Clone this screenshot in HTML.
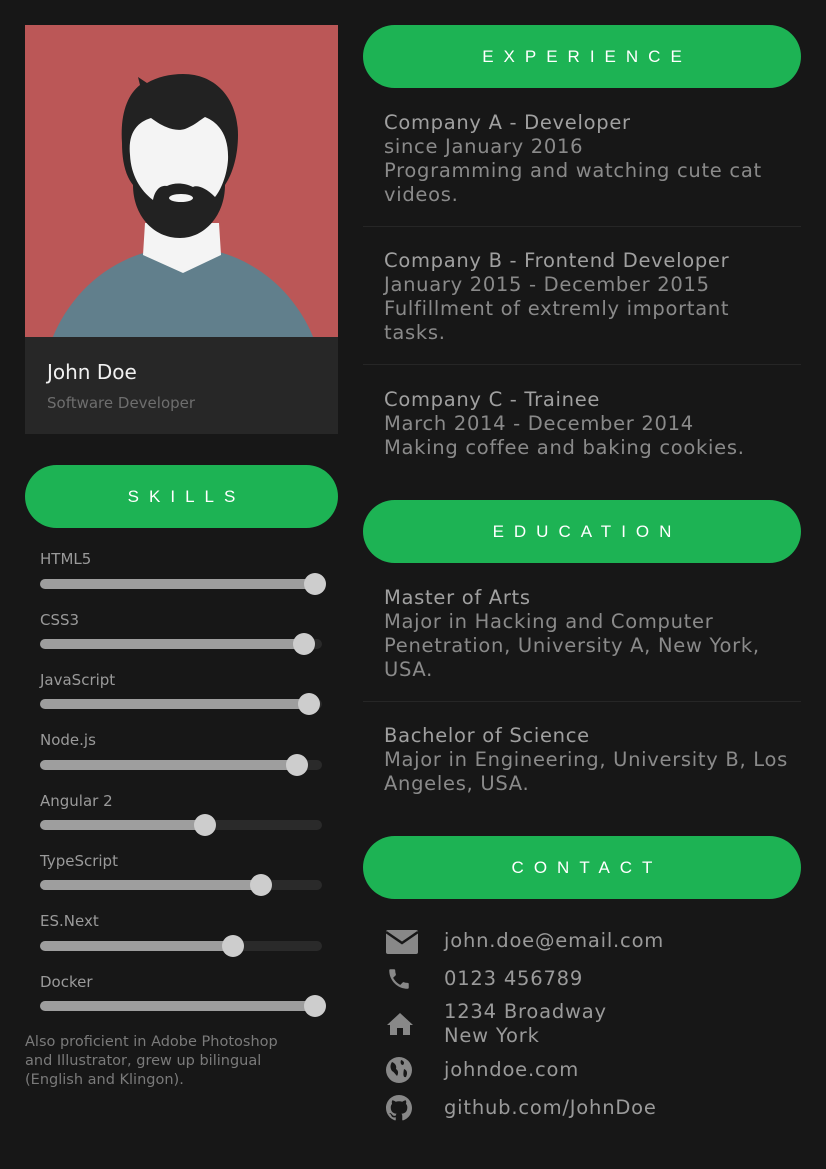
<!DOCTYPE html>
<html><head><meta charset="utf-8"><style>
*{margin:0;padding:0;box-sizing:border-box}
body{width:826px;height:1169px;background:#171717;position:relative;overflow:hidden;font-family:"DejaVu Sans","Liberation Sans",sans-serif;color:#8e8e8e}
.a{position:absolute;white-space:nowrap}
.btn{position:absolute;height:63px;border-radius:32px;background:#1db354;color:#fff;font-size:17px;letter-spacing:10px;text-align:center;line-height:63px;padding-left:10px;font-family:"Liberation Sans",sans-serif}
.txt{position:absolute;left:384px;font-size:19.5px;letter-spacing:0.7px;line-height:24px;color:#8a8a8a;white-space:nowrap}
.txt b{font-weight:normal;color:#a0a0a0}
.hr{position:absolute;left:363px;width:438px;height:1px;background:#262626}
.lbl{position:absolute;left:40px;font-size:15px;color:#9a9a9a}
.tr{position:absolute;left:40px;width:282px;height:10px;border-radius:5px;background:#2a2a2a}
.fill{position:absolute;left:0;top:0;height:10px;border-radius:5px;background:#9e9e9e}
.kn{position:absolute;width:22px;height:22px;border-radius:50%;background:#cdcdcd;top:-6px}
.ct{position:absolute;left:444px;font-size:19.5px;letter-spacing:0.8px;color:#9a9a9a;line-height:24px;white-space:nowrap}
.ic{position:absolute;left:386px}
</style></head><body>
<div class="a" style="left:25px;top:25px;width:313px;height:312px;background:#bb5757;overflow:hidden">
<svg width="313" height="312" viewBox="0 0 313 312">
<ellipse cx="158" cy="372" rx="142" ry="150" fill="#617f8c"/>
<polygon points="120,198 194,198 196,230 158,248 118,230" fill="#f4f4f4"/>
<path d="M97 118 C95 90 102 70 115 60 L113 52 L122 58 C132 52 145 49 158 49 C192 49 213 75 213 110 C213 130 208 148 200 160 C200 190 180 213 155 213 C128 213 108 190 108 160 C100 150 97 135 97 118Z" fill="#222"/>
<path d="M105 130 C103 110 110 98 126 93 C138 102 150 107 160 104 C170 100 175 95 180 92 C195 98 204 112 203 135 C202 150 196 165 190 172 C180 162 172 160 168 162 C160 158 150 157 142 161 C135 160 130 165 128 175 C115 165 106 150 105 130Z" fill="#f4f4f4"/>
<ellipse cx="156" cy="173" rx="12" ry="4" fill="#f4f4f4"/>
</svg></div>
<div class="a" style="left:25px;top:337px;width:313px;height:97px;background:#272727"></div>
<div class="a" style="left:47px;top:360px;font-size:20px;color:#f0f0f0">John Doe</div>
<div class="a" style="left:47px;top:394px;font-size:15px;color:#6e6e6e">Software Developer</div>

<div class="btn" style="left:25px;top:465px;width:313px">SKILLS</div>

<div class="lbl" style="top:550px">HTML5</div><div class="tr" style="top:579px"><div class="fill" style="width:275px"></div><div class="kn" style="left:264px"></div></div>
<div class="lbl" style="top:611px">CSS3</div><div class="tr" style="top:639px"><div class="fill" style="width:264px"></div><div class="kn" style="left:253px"></div></div>
<div class="lbl" style="top:671px">JavaScript</div><div class="tr" style="top:699px"><div class="fill" style="width:269px"></div><div class="kn" style="left:258px"></div></div>
<div class="lbl" style="top:731px">Node.js</div><div class="tr" style="top:760px"><div class="fill" style="width:257px"></div><div class="kn" style="left:246px"></div></div>
<div class="lbl" style="top:792px">Angular 2</div><div class="tr" style="top:820px"><div class="fill" style="width:165px"></div><div class="kn" style="left:154px"></div></div>
<div class="lbl" style="top:852px">TypeScript</div><div class="tr" style="top:880px"><div class="fill" style="width:221px"></div><div class="kn" style="left:210px"></div></div>
<div class="lbl" style="top:912px">ES.Next</div><div class="tr" style="top:941px"><div class="fill" style="width:193px"></div><div class="kn" style="left:182px"></div></div>
<div class="lbl" style="top:973px">Docker</div><div class="tr" style="top:1001px"><div class="fill" style="width:275px"></div><div class="kn" style="left:264px"></div></div>
<div class="a" style="left:25px;top:1033px;font-size:14.5px;line-height:19px;color:#7a7a7a">Also proficient in Adobe Photoshop<br>and Illustrator, grew up bilingual<br>(English and Klingon).</div>

<div class="btn" style="left:363px;top:25px;width:438px">EXPERIENCE</div>
<div class="txt" style="top:111px"><b>Company A - Developer</b><br>since January 2016<br>Programming and watching cute cat<br>videos.</div>
<div class="hr" style="top:226px"></div>
<div class="txt" style="top:249px"><b>Company B - Frontend Developer</b><br>January 2015 - December 2015<br>Fulfillment of extremly important<br>tasks.</div>
<div class="hr" style="top:364px"></div>
<div class="txt" style="top:388px"><b>Company C - Trainee</b><br>March 2014 - December 2014<br>Making coffee and baking cookies.</div>

<div class="btn" style="left:363px;top:500px;width:438px">EDUCATION</div>
<div class="txt" style="top:586px"><b>Master of Arts</b><br>Major in Hacking and Computer<br>Penetration, University A, New York,<br>USA.</div>
<div class="hr" style="top:701px"></div>
<div class="txt" style="top:724px"><b>Bachelor of Science</b><br>Major in Engineering, University B, Los<br>Angeles, USA.</div>

<div class="btn" style="left:363px;top:836px;width:438px">CONTACT</div>
<svg class="ic" style="top:930px" width="32" height="24" viewBox="0 0 32 24"><rect x="0" y="0" width="32" height="24" rx="2" fill="#888"/><path d="M0 2 L16 13 L32 2" stroke="#171717" stroke-width="2.5" fill="none"/></svg>
<div class="ct" style="top:929px">john.doe@email.com</div>
<svg class="ic" style="top:966px" width="26" height="26" viewBox="0 0 24 24"><path d="M6.6 10.8c1.4 2.8 3.8 5.1 6.6 6.6l2.2-2.2c.3-.3.7-.4 1-.2 1.1.4 2.3.6 3.6.6.6 0 1 .4 1 1V20c0 .6-.4 1-1 1C10.6 21 3 13.4 3 4c0-.6.4-1 1-1h3.5c.6 0 1 .4 1 1 0 1.3.2 2.5.6 3.6.1.3 0 .7-.2 1z" fill="#888"/></svg>
<div class="ct" style="top:967px">0123 456789</div>
<svg class="ic" style="top:1012px" width="28" height="24" viewBox="0 0 28 24"><path d="M14 1 L1 13 L4 13 L4 23 L11 23 L11 16 L17 16 L17 23 L24 23 L24 13 L27 13 Z" fill="#888"/></svg>
<div class="ct" style="top:1000px">1234 Broadway<br>New York</div>
<svg class="ic" style="top:1057px" width="26" height="26" viewBox="0 0 26 26"><circle cx="13" cy="13" r="13" fill="#888"/><path d="M6 5 C9 6 11 9 10 12 C12 13 13 16 11 19 C9 17 8 15 6 14 C4 11 4 8 6 5Z M15 3 C18 4 19 6 17 8 C15 8 14 6 15 3Z M18 12 C21 13 22 16 20 20 C17 21 17 17 18 12Z" fill="#171717"/></svg>
<div class="ct" style="top:1058px">johndoe.com</div>
<svg class="ic" style="top:1095px" width="26" height="26" viewBox="0 0 16 16"><path fill="#888" d="M8 0C3.58 0 0 3.58 0 8c0 3.54 2.29 6.53 5.47 7.59.4.07.55-.17.55-.38 0-.19-.01-.82-.01-1.49-2.01.37-2.53-.49-2.69-.94-.09-.23-.48-.94-.82-1.13-.28-.15-.68-.52-.01-.53.63-.01 1.08.58 1.23.82.72 1.21 1.87.87 2.33.66.07-.52.28-.87.51-1.07-1.78-.2-3.64-.89-3.64-3.95 0-.87.31-1.59.82-2.15-.08-.2-.36-1.02.08-2.12 0 0 .67-.21 2.2.82.64-.18 1.32-.27 2-.27.68 0 1.36.09 2 .27 1.53-1.04 2.2-.82 2.2-.82.44 1.1.16 1.92.08 2.12.51.56.82 1.27.82 2.15 0 3.07-1.87 3.75-3.65 3.95.29.25.54.73.54 1.48 0 1.07-.01 1.93-.01 2.2 0 .21.15.46.55.38A8.013 8.013 0 0016 8c0-4.42-3.58-8-8-8z"/></svg>
<div class="ct" style="top:1096px">github.com/JohnDoe</div>
</body></html>
